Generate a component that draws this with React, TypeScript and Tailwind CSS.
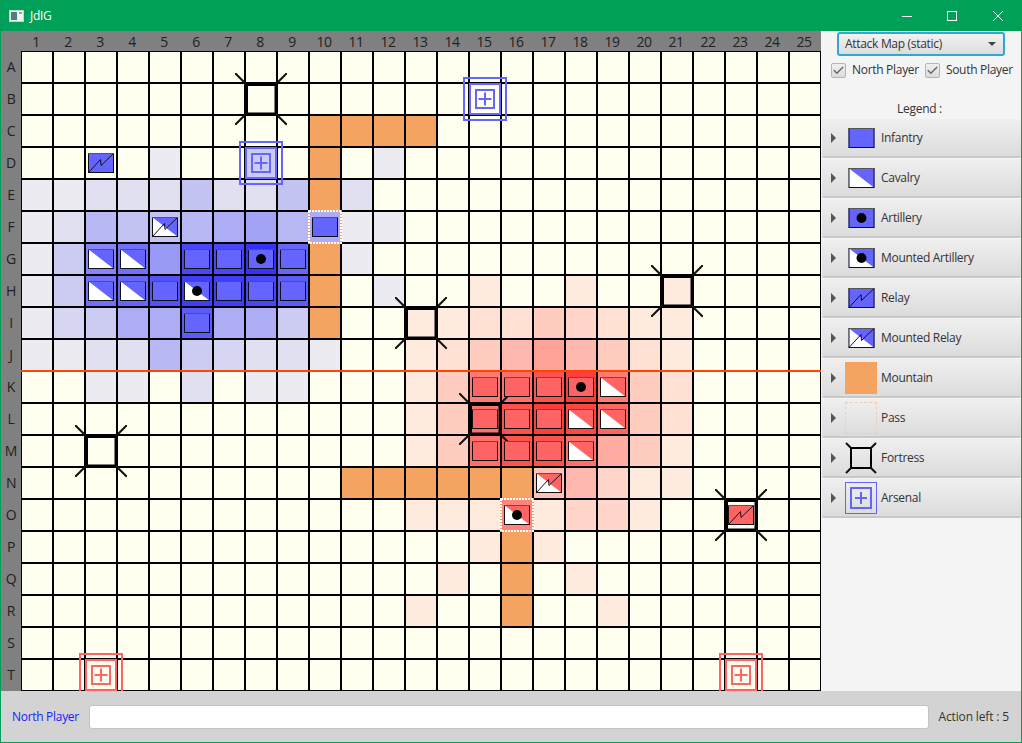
import React from 'react';
import { Check } from 'lucide-react';

const COLS = Array.from({ length: 25 }, (_, i) => i + 1);
const ROWS = 'ABCDEFGHIJKLMNOPQRST'.split('');

// one letter per cell, a = 4% opacity, b = 8%, and so on
const NORTH_HEAT = [
    '.........................',
    '.........................',
    '.........................',
    '....b..e...b.............',
    'bbcccfccf.c..............',
    'bcgffghighbb.............',
    'belnjrrto.b..............',
    'benoqssrp..b.............',
    'bdehhphhe................',
    'bbccgedccb...............',
    '..bb.c.bb................',
];

const SOUTH_HEAT = [
    '.........................',
    '.........................',
    '.........................',
    '.........................',
    '.........................',
    '.........................',
    '.........................',
    '..............b..b..b....',
    '............bbccedcbb....',
    '............bcegigecb....',
    '............bemnqsmec....',
    '............benqsroec....',
    '............benqqnheb....',
    '................fgdbb....',
    '............bbblbddb.....',
    '..............b.b........',
    '.............b...b.......',
    '............b.....b......',
];

const MOUNTAINS = ['C10', 'C11', 'C12', 'C13', 'D10', 'E10', 'G10', 'H10', 'I10', 'N11', 'N12', 'N13', 'N14', 'N15', 'N16', 'P16', 'Q16', 'R16'];
const PASSES = ['F10', 'O16'];
const FORTRESSES = ['B8', 'I13', 'H21', 'L15', 'M3', 'O23'];
const ARSENALS: Record<string, string> = { B15: '#6464ff', D8: '#6464ff', T3: '#ff6464', T23: '#ff6464' };

type Kind = 'infantry' | 'cavalry' | 'artillery' | 'mountedArtillery' | 'relay' | 'mountedRelay';

const UNITS: Record<string, Kind> = {
    D3: 'relay', F5: 'mountedRelay', F10: 'infantry',
    G3: 'cavalry', G4: 'cavalry', G6: 'infantry', G7: 'infantry', G8: 'artillery', G9: 'infantry',
    H3: 'cavalry', H4: 'cavalry', H5: 'infantry', H6: 'mountedArtillery', H7: 'infantry', H8: 'infantry', H9: 'infantry',
    I6: 'infantry',
    K15: 'infantry', K16: 'infantry', K17: 'infantry', K18: 'artillery', K19: 'cavalry',
    L15: 'infantry', L16: 'infantry', L17: 'infantry', L18: 'cavalry', L19: 'cavalry',
    M15: 'infantry', M16: 'infantry', M17: 'infantry', M18: 'cavalry',
    N17: 'mountedRelay', O16: 'mountedArtillery', O23: 'relay',
};

const heatColor = (row: number, col: number) => {
    const n = NORTH_HEAT[row]?.[col] ?? '.';
    const s = SOUTH_HEAT[row]?.[col] ?? '.';
    if (s !== '.') return `rgba(255,0,0,${(s.charCodeAt(0) - 96) * 0.04})`;
    if (n !== '.') return `rgba(0,0,255,${(n.charCodeAt(0) - 96) * 0.04})`;
    return undefined;
};

const UnitGlyph: React.FC<{ kind: Kind; color: string; className?: string }> = ({ kind, color, className }) => {
    const mounted = kind === 'cavalry' || kind === 'mountedArtillery' || kind === 'mountedRelay';
    return (
        <svg className={className} viewBox="0 0 26 20" xmlns="http://www.w3.org/2000/svg">
            <rect x="0" y="0" width="26" height="20" fill={color} />
            {mounted && <polygon points="0,0 26,20 0,20" fill="#ffffff" />}
            {(kind === 'artillery' || kind === 'mountedArtillery') && <circle cx="13" cy="10" r="5" fill="#000000" />}
            {(kind === 'relay' || kind === 'mountedRelay') && <path d="M0.5 19.5 L12.5 6.5 L13 12.5 L25.5 0.5" fill="none" stroke="#111111" strokeWidth="1" />}
            <rect x="0.5" y="0.5" width="25" height="19" fill="none" stroke="#111111" strokeWidth="1" />
            <line x1="0" y1="0.5" x2="26" y2="0.5" stroke="#555555" strokeWidth="1" />
        </svg>
    );
};

const FortressMark: React.FC = () => (
    <svg className="absolute -left-[11px] -top-[11px] z-10 h-[52px] w-[52px]" viewBox="0 0 52 52" xmlns="http://www.w3.org/2000/svg">
        <rect x="11.5" y="11.5" width="29.5" height="29.5" fill="none" stroke="#000000" strokeWidth="3" />
        <path d="M0 0 L11 11 M52 0 L41 11 M0 52 L11 41 M52 52 L41 41" stroke="#111111" strokeWidth="2" />
    </svg>
);

const ArsenalMark: React.FC<{ color: string }> = ({ color }) => (
    <svg className="absolute -left-[7px] -top-[7px] z-10 h-[44px] w-[44px]" viewBox="0 0 44 44" xmlns="http://www.w3.org/2000/svg">
        <g fill="none" stroke={color} strokeWidth="2">
            <rect x="1" y="1" width="42" height="42" />
            <rect x="7" y="7" width="30" height="30" />
            <rect x="13" y="13" width="18" height="18" />
            <path d="M22 15.5 V28.5 M15.5 22 H28.5" />
        </g>
    </svg>
);

const PassMark: React.FC = () => (
    <svg className="absolute -left-[2px] -top-[2px] z-10 h-[34px] w-[34px]" viewBox="0 0 34 34" xmlns="http://www.w3.org/2000/svg">
        <rect x="1" y="1" width="32" height="32" fill="none" stroke="#f4a460" strokeWidth="2" />
        <rect x="1" y="1" width="32" height="32" fill="none" stroke="#ffffff" strokeWidth="2" strokeDasharray="2 1" />
    </svg>
);

const Cell: React.FC<{ id: string; row: number; col: number }> = ({ id, row, col }) => {
    const unit = UNITS[id];
    const isMountain = MOUNTAINS.includes(id);
    return (
        <div
            className={`relative h-[32px] w-[32px] border border-black ${isMountain ? 'bg-[#f4a460]' : ''}`}
            style={isMountain ? undefined : { backgroundColor: heatColor(row, col) }}
        >
            {PASSES.includes(id) && <PassMark />}
            {FORTRESSES.includes(id) && <FortressMark />}
            {ARSENALS[id] && <ArsenalMark color={ARSENALS[id]} />}
            {unit && (
                <UnitGlyph
                    kind={unit}
                    color={row < 10 ? '#6464ff' : '#ff6464'}
                    className="absolute left-[2px] top-[5px] z-20 h-[20px] w-[26px]"
                />
            )}
        </div>
    );
};

const Board: React.FC = () => (
    <div className="grid grid-cols-[20px_800px] grid-rows-[20px_640px] bg-[#808080] text-[#222222]">
        <div />
        <div className="grid grid-cols-[repeat(25,32px)]">
            {COLS.map((c) => (
                <div key={c} className="flex items-center justify-center pr-[2px] pt-[1px] text-[14px] leading-none tracking-[-0.6px]">{c}</div>
            ))}
        </div>
        <div className="grid grid-rows-[repeat(20,32px)]">
            {ROWS.map((r) => (
                <div key={r} className="flex items-center justify-center pb-[1px] text-[14px] leading-none">{r}</div>
            ))}
        </div>
        <div className="relative grid grid-cols-[repeat(25,32px)] grid-rows-[repeat(20,32px)] overflow-hidden bg-[#fffff0]">
            {ROWS.map((r, ri) =>
                COLS.map((c, ci) => <Cell key={`${r}${c}`} id={`${r}${c}`} row={ri} col={ci} />)
            )}
            <div className="absolute left-0 top-[319px] z-30 h-[2px] w-full bg-[#ff4500]" />
        </div>
    </div>
);

const LegendFortress: React.FC = () => (
    <svg className="h-[32px] w-[32px]" viewBox="0 0 32 32" xmlns="http://www.w3.org/2000/svg">
        <rect x="6" y="6" width="20" height="20" fill="none" stroke="#000000" strokeWidth="2" />
        <path d="M1 1 L6 6 M31 1 L26 6 M1 31 L6 26 M31 31 L26 26" stroke="#111111" strokeWidth="2" />
    </svg>
);

const LegendArsenal: React.FC = () => (
    <svg className="h-[32px] w-[32px]" viewBox="0 0 32 32" xmlns="http://www.w3.org/2000/svg">
        <g fill="none" stroke="#6464ff">
            <rect x="0.5" y="0.5" width="31" height="31" strokeWidth="1" />
            <rect x="6" y="6" width="20" height="20" strokeWidth="2" />
            <path d="M16 10 V22 M10 16 H22" strokeWidth="2" />
        </g>
    </svg>
);

const LEGEND: { label: string; icon: React.ReactNode }[] = [
    { label: 'Infantry', icon: <UnitGlyph kind="infantry" color="#6464ff" className="h-[20px] w-[27px]" /> },
    { label: 'Cavalry', icon: <UnitGlyph kind="cavalry" color="#6464ff" className="h-[20px] w-[27px]" /> },
    { label: 'Artillery', icon: <UnitGlyph kind="artillery" color="#6464ff" className="h-[20px] w-[27px]" /> },
    { label: 'Mounted Artillery', icon: <UnitGlyph kind="mountedArtillery" color="#6464ff" className="h-[20px] w-[27px]" /> },
    { label: 'Relay', icon: <UnitGlyph kind="relay" color="#6464ff" className="h-[20px] w-[27px]" /> },
    { label: 'Mounted Relay', icon: <UnitGlyph kind="mountedRelay" color="#6464ff" className="h-[20px] w-[27px]" /> },
    { label: 'Mountain', icon: <div className="h-[32px] w-[32px] bg-[#f4a460]" /> },
    { label: 'Pass', icon: <div className="h-[32px] w-[32px] border border-dashed border-[#f0cfa8]" /> },
    { label: 'Fortress', icon: <LegendFortress /> },
    { label: 'Arsenal', icon: <LegendArsenal /> },
];

const Checkbox: React.FC<{ label: string }> = ({ label }) => (
    <label className="flex items-center gap-[6px]">
        <span className="flex h-[15px] w-[15px] items-center justify-center rounded-[2px] border border-[#b5b5b5] bg-gradient-to-b from-[#f0f0f0] to-[#dcdcdc]">
            <Check className="h-[13px] w-[13px] text-[#666666]" strokeWidth={2.5} />
        </span>
        <span>{label}</span>
    </label>
);

const SidePanel: React.FC = () => (
    <div className="flex w-[200px] flex-col bg-[#f4f4f4] text-[12px] text-[#333333]">
        <div className="ml-[16px] mt-[1px] flex h-[24px] w-[168px] items-center justify-between rounded-[3px] border-2 border-[#2fa8d5] bg-gradient-to-b from-[#f2f2f2] to-[#dcdcdc] pl-[6px] pr-[7px]">
            <span>Attack Map (static)</span>
            <span className="h-0 w-0 border-x-[4px] border-t-[4px] border-x-transparent border-t-[#444444]" />
        </div>
        <div className="ml-[10px] mt-[6px] flex h-[16px] items-center gap-[6px]">
            <Checkbox label="North Player" />
            <Checkbox label="South Player" />
        </div>
        <div className="mb-[1px] mt-[22px] h-[17px] pr-[3px] text-center leading-[17px]">Legend :</div>
        <div className="flex flex-col pl-[1px]">
            {LEGEND.map((item) => (
                <div key={item.label} className="flex h-[40px] items-center rounded-[2px] border-b-2 border-t border-b-[#c8c8c8] border-t-[#f5f5f5] bg-gradient-to-b from-[#efefef] to-[#dcdcdc] pl-[9px]">
                    <span className="h-0 w-0 border-y-[5px] border-l-[5px] border-y-transparent border-l-[#555555]" />
                    <span className="ml-[9px] flex w-[32px] items-center justify-center">{item.icon}</span>
                    <span className="ml-[4px]">{item.label}</span>
                </div>
            ))}
        </div>
    </div>
);

const TitleBar: React.FC = () => (
    <div className="flex h-[31px] items-center bg-[#00a058] text-white">
        <svg className="ml-[8px] h-[12px] w-[15px]" viewBox="0 0 15 12" xmlns="http://www.w3.org/2000/svg">
            <rect x="0.5" y="0.5" width="14" height="11" fill="#eef2f2" stroke="#c9d2d2" />
            <rect x="2" y="2" width="6" height="8" fill="#4d7f7c" />
            <rect x="10" y="2" width="3" height="2" fill="#8fa5a3" />
        </svg>
        <span className="ml-[6px] text-[12px]">JdIG</span>
        <div className="ml-auto flex items-center">
            <svg className="mr-[35px] h-[10px] w-[10px]" viewBox="0 0 10 10" xmlns="http://www.w3.org/2000/svg"><path d="M0 5.5 H10" stroke="#ffffff" strokeWidth="1" /></svg>
            <svg className="mr-[36px] h-[10px] w-[10px]" viewBox="0 0 10 10" xmlns="http://www.w3.org/2000/svg"><rect x="0.5" y="0.5" width="9" height="9" fill="none" stroke="#ffffff" strokeWidth="1" /></svg>
            <svg className="mr-[18px] h-[10px] w-[10px]" viewBox="0 0 10 10" xmlns="http://www.w3.org/2000/svg"><path d="M0 0 L10 10 M10 0 L0 10" stroke="#ffffff" strokeWidth="1" /></svg>
        </div>
    </div>
);

const App: React.FC = () => (
    <div className="flex h-[743px] w-[1022px] flex-col overflow-hidden border-x border-b border-[#00a058] font-['Open_Sans',sans-serif] tracking-[-0.3px]">
        <TitleBar />
        <div className="flex">
            <Board />
            <SidePanel />
        </div>
        <div className="flex flex-1 items-center bg-[#d3d3d3] pl-[11px] pr-[12px] text-[12px]">
            <span className="text-[#1a1aff]">North Player</span>
            <div className="ml-[10px] h-[24px] flex-1 rounded-[3px] border border-[#c4c4c4] bg-white" />
            <span className="ml-[10px] tracking-[-0.15px] text-[#333333]">Action left : 5</span>
        </div>
    </div>
);

export default App;
